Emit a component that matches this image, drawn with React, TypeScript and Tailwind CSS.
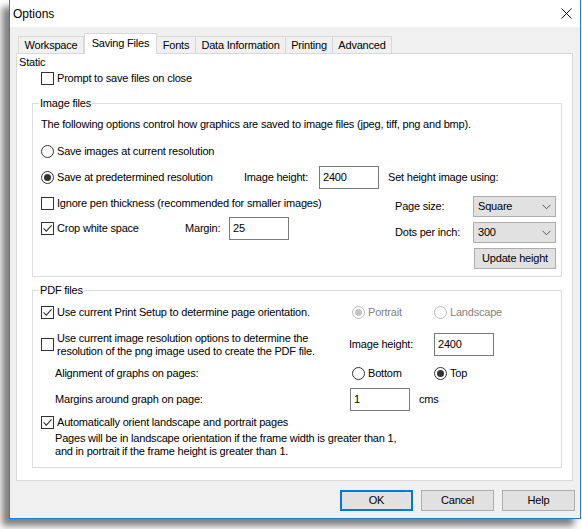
import React from "react";

const tabs = [
  { label: "Workspace", cls: "w-[66px] border-l" },
  { label: "Saving Files", cls: "", active: true },
  { label: "Fonts", cls: "w-[39px]" },
  { label: "Data Information", cls: "w-[90px]" },
  { label: "Printing", cls: "w-[47px]" },
  { label: "Advanced", cls: "w-[59px]" },
];

function Check({ checked }: { checked?: boolean }) {
  return (
    <span className="flex h-[13px] w-[13px] shrink-0 items-center justify-center border border-[#333] bg-white">
      {checked && (
        <svg width="11" height="11" viewBox="0 0 11 11">
          <path d="M1.6 5.4 L4.3 8.2 L9.6 2.4" fill="none" stroke="#333" strokeWidth="1.1" />
        </svg>
      )}
    </span>
  );
}

function Radio({ on, disabled }: { on?: boolean; disabled?: boolean }) {
  return (
    <span
      className={
        disabled
          ? "flex h-[13px] w-[13px] shrink-0 items-center justify-center rounded-full border border-[#bcbcbc] bg-white"
          : "flex h-[13px] w-[13px] shrink-0 items-center justify-center rounded-full border border-[#333] bg-white"
      }
    >
      {on && (
        <span className={disabled ? "h-[7px] w-[7px] rounded-full bg-[#c4c4c4]" : "h-[7px] w-[7px] rounded-full bg-[#333]"} />
      )}
    </span>
  );
}

function Field({ value, w = "w-[60px]" }: { value: string; w?: string }) {
  return (
    <div className={`${w} flex h-[23px] shrink-0 items-start border border-[#7a7a7a] bg-white pl-[3px] pt-[3px] leading-[14px]`}>
      {value}
    </div>
  );
}

function Select({ value }: { value: string }) {
  return (
    <div className="flex h-[21px] w-[83px] items-center justify-between border border-[#adadad] bg-[#e1e1e1] pl-[4px] pr-[4px]">
      <span>{value}</span>
      <svg width="9" height="6" viewBox="0 0 9 6">
        <path d="M0.5 0.8 L4.5 4.8 L8.5 0.8" fill="none" stroke="#555" strokeWidth="1" />
      </svg>
    </div>
  );
}

function Button({ label, def, w = "w-[73px]" }: { label: string; def?: boolean; w?: string }) {
  return (
    <div
      className={
        def
          ? `${w} flex h-[21px] items-center justify-center border-2 border-[#0078d7] bg-[#e1e1e1]`
          : `${w} flex h-[21px] items-center justify-center border border-[#adadad] bg-[#e1e1e1]`
      }
    >
      {label}
    </div>
  );
}

export default function App() {
  return (
    <div className="h-[529px] w-[582px] overflow-hidden bg-white font-['Liberation_Sans',Arial,sans-serif] text-black">
      <div className="ml-[9px] flex h-[519px] w-[572px] flex-col border-x border-b border-[#1883d7] bg-[#f0f0f0] shadow-[-7px_7px_7px_rgba(0,0,0,0.5)]">
        {/* title bar */}
        <div className="flex h-[27px] items-center justify-between bg-white pl-[3px] pr-[8px] text-[12px]">
          <span>Options</span>
          <svg width="11" height="11" viewBox="0 0 11 11">
            <path d="M0.5 0.5 L10.5 10.5 M10.5 0.5 L0.5 10.5" stroke="#111" strokeWidth="1" />
          </svg>
        </div>

        <div className="flex flex-1 flex-col pl-[6px] pt-[6px] text-[11px] tracking-[-0.2px]">
          {/* tabs */}
          <div className="flex h-[20px] items-end pl-[2px]">
            {tabs.map((t) =>
              t.active ? (
                <div
                  key={t.label}
                  className="relative z-10 -mb-px flex h-[21px] w-[73px] items-center justify-center border-x border-t border-[#d9d9d9] bg-white pb-[2px]"
                >
                  {t.label}
                </div>
              ) : (
                <div
                  key={t.label}
                  className={`${t.cls} flex h-[17px] items-center justify-center border-r border-t border-[#d9d9d9] bg-[#f0f0f0]`}
                >
                  {t.label}
                </div>
              )
            )}
          </div>

          {/* panel */}
          <div className="w-[557px] border border-[#d9d9d9] bg-white pb-[12px]">
            <div className="mt-[1px] h-[14px] pl-[2px] leading-[14px]">Static</div>
            <div className="mt-[2px] flex h-[14px] items-center gap-[3px] pl-[24px]">
              <Check />
              <span>Prompt to save files on close</span>
            </div>

            <fieldset className="ml-[15px] mt-[11px] w-[530px] border border-[#dcdcdc] pb-[7px] pl-[8px]">
              <legend className="-ml-[2px] px-[1px] leading-[14px]">Image files</legend>
              <div className="mt-[7px] h-[14px] leading-[14px]">
                The following options control how graphics are saved to image files (jpeg, tiff, png and bmp).
              </div>
              <div className="mt-[13px] flex h-[14px] items-center gap-[3px]">
                <Radio />
                <span>Save images at current resolution</span>
              </div>
              <div className="mt-[8px] flex h-[23px] items-center">
                <div className="flex w-[203px] items-center gap-[3px]">
                  <Radio on />
                  <span>Save at predetermined resolution</span>
                </div>
                <span className="w-[75px]">Image height:</span>
                <Field value="2400" />
                <span className="ml-[9px]">Set height image using:</span>
              </div>
              <div className="mt-[7px] flex">
                <div className="w-[354px]">
                  <div className="flex h-[14px] items-center gap-[3px]">
                    <Check />
                    <span>Ignore pen thickness (recommended for smaller images)</span>
                  </div>
                  <div className="mt-[7px] flex h-[23px] items-center">
                    <div className="flex w-[144px] items-center gap-[3px]">
                      <Check checked />
                      <span>Crop white space</span>
                    </div>
                    <span className="w-[44px]">Margin:</span>
                    <Field value="25" />
                  </div>
                </div>
                <div>
                  <div className="flex items-center">
                    <span className="w-[78px]">Page size:</span>
                    <Select value="Square" />
                  </div>
                  <div className="mt-[5px] flex items-center">
                    <span className="w-[78px]">Dots per inch:</span>
                    <Select value="300" />
                  </div>
                  <div className="mt-[5px] ml-[79px]">
                    <Button label="Update height" w="w-[82px]" />
                  </div>
                </div>
              </div>
            </fieldset>

            <fieldset className="ml-[15px] mt-[6px] w-[530px] border border-[#dcdcdc] pb-[9px] pl-[8px]">
              <legend className="-ml-[2px] px-[1px] leading-[14px]">PDF files</legend>
              <div className="mt-[8px] flex h-[14px] items-center">
                <div className="flex w-[311px] items-center gap-[3px]">
                  <Check checked />
                  <span>Use current Print Setup to determine page orientation.</span>
                </div>
                <div className="flex w-[82px] items-center gap-[3px] text-[#838383]">
                  <Radio on disabled />
                  <span>Portrait</span>
                </div>
                <div className="flex items-center gap-[3px] text-[#838383]">
                  <Radio disabled />
                  <span>Landscape</span>
                </div>
              </div>
              <div className="mt-[14px] flex h-[23px] items-center">
                <div className="flex w-[308px] items-center gap-[3px]">
                  <Check />
                  <span className="leading-[13px]">
                    Use current image resolution options to determine the
                    <br />
                    resolution of the png image used to create the PDF file.
                  </span>
                </div>
                <span className="w-[85px]">Image height:</span>
                <Field value="2400" />
              </div>
              <div className="mt-[10px] flex h-[14px] items-center">
                <span className="w-[311px] pl-[14px]">Alignment of graphs on pages:</span>
                <div className="flex w-[82px] items-center gap-[3px]">
                  <Radio />
                  <span>Bottom</span>
                </div>
                <div className="flex items-center gap-[3px]">
                  <Radio on />
                  <span>Top</span>
                </div>
              </div>
              <div className="mt-[8px] flex h-[23px] items-center">
                <span className="w-[309px] pl-[14px]">Margins around graph on page:</span>
                <Field value="1" />
                <span className="ml-[9px]">cms</span>
              </div>
              <div className="mt-[4px] flex h-[14px] items-center gap-[3px]">
                <Check checked />
                <span>Automatically orient landscape and portrait pages</span>
              </div>
              <div className="mt-[3px] pl-[14px] leading-[13px]">
                Pages will be in landscape orientation if the frame width is greater than 1,
                <br />
                and in portrait if the frame height is greater than 1.
              </div>
            </fieldset>
          </div>

          {/* dialog buttons */}
          <div className="mt-[9px] flex justify-end gap-[8px] pr-[5px]">
            <Button label="OK" def />
            <Button label="Cancel" />
            <Button label="Help" />
          </div>
        </div>
      </div>
    </div>
  );
}
